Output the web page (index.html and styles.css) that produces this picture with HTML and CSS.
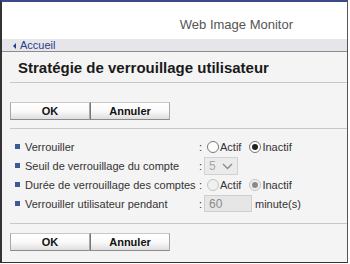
FILE: index.html
```html
<!DOCTYPE html>
<html lang="fr">
<head>
    <meta charset="UTF-8">
    <title>Stratégie de verrouillage utilisateur</title>
    <link rel="stylesheet" href="styles.css">
</head>
<body>

<div class="window">
    <header class="brand">Web Image Monitor</header>

    <nav class="crumbs">
        <a href="#" class="back">Accueil</a>
    </nav>

    <main class="content">
        <h1>Stratégie de verrouillage utilisateur</h1>

        <div class="actions">
            <button type="button">OK</button><button type="button">Annuler</button>
        </div>

        <ul class="settings">
            <li>
                <span class="label">Verrouiller</span>
                <span class="colon">:</span>
                <span class="controls">
                    <label><input type="radio" name="lock"> Actif</label>
                    <label><input type="radio" name="lock" checked> Inactif</label>
                </span>
            </li>
            <li>
                <span class="label">Seuil de verrouillage du compte</span>
                <span class="colon">:</span>
                <span class="controls">
                    <span class="select">
                        <select disabled><option>5</option></select>
                        <svg class="chev" width="11" height="7" viewBox="0 0 11 7"><path d="M1 1l4.5 4.5L10 1" fill="none" stroke="#8a8a8a" stroke-width="1.3"/></svg>
                    </span>
                </span>
            </li>
            <li>
                <span class="label">Durée de verrouillage des comptes</span>
                <span class="colon">:</span>
                <span class="controls">
                    <label><input type="radio" name="duration" disabled> Actif</label>
                    <label><input type="radio" name="duration" checked disabled> Inactif</label>
                </span>
            </li>
            <li>
                <span class="label">Verrouiller utilisateur pendant</span>
                <span class="colon">:</span>
                <span class="controls">
                    <input type="text" class="minutes" value="60" disabled>
                    <span class="unit">minute(s)</span>
                </span>
            </li>
        </ul>

        <div class="actions">
            <button type="button">OK</button><button type="button">Annuler</button>
        </div>
    </main>
</div>

</body>
</html>
```

FILE: styles.css
```css
* {
    box-sizing: border-box;
}
body {
    margin: 0;
    background-color: #ffffff;
    font-family: "Liberation Sans", Arial, sans-serif;
    color: #333;
}
.window {
    width: 348px;
    height: 263px;
    border-top: 2px solid #3d4a8a;
    border-left: 2px solid #333;
    border-right: 1px solid #555;
    border-bottom: 1px solid #333;
    background-color: #f4f4f4;
    display: flex;
    flex-direction: column;
}
.brand {
    height: 37px;
    background-color: #fff;
    text-align: right;
    padding: 16px 54px 0 0;
    font-size: 13px;
    line-height: 13px;
    color: #555;
}
.crumbs {
    height: 13px;
    background-color: #e6e6ea;
    border-bottom: 1px solid #8c8c8c;
    padding-left: 11px;
    font-size: 11px;
    line-height: 12px;
}
.crumbs .back {
    color: #263c8c;
    text-decoration: none;
}
.crumbs .back::before {
    content: "";
    display: inline-block;
    border-right: 3px solid #263c8c;
    border-top: 3px solid transparent;
    border-bottom: 3px solid transparent;
    margin-right: 4px;
    vertical-align: 0;
}
.content {
    flex: 1;
    padding: 7px 0 0 8px;
}
.content h1 {
    margin: 0 0 19px;
    padding: 0 0 5px 8px;
    font-size: 15px;
    line-height: 18px;
    font-weight: bold;
    color: #1a1a1a;
    border-bottom: 1px solid #c8c8c8;
}
.actions {
    display: flex;
}
.actions button {
    width: 80px;
    height: 18px;
    padding: 0;
    font-family: "Liberation Sans", Arial, sans-serif;
    font-size: 11px;
    font-weight: bold;
    color: #111;
    background: linear-gradient(#ffffff, #fafafa 50%, #dedede);
    border: 1px solid #a8a8a8;
    border-top-color: #c8c8c8;
    border-bottom-color: #8c8c8c;
}
.actions button + button {
    border-left-color: #777;
}
.settings {
    list-style: none;
    margin: 8px 0 9px;
    padding: 8px 0 10px 5px;
    border-top: 1px solid #c8c8c8;
    border-bottom: 1px solid #c8c8c8;
    font-size: 11px;
}
.settings li {
    display: flex;
    align-items: center;
    height: 19px;
}
.settings li::before {
    content: "";
    width: 5px;
    height: 5px;
    background-color: #3d5a98;
    margin-right: 5px;
}
.settings .label {
    width: 174px;
}
.settings .colon {
    width: 5px;
}
.settings .controls {
    display: flex;
    align-items: center;
}
.settings .controls label {
    display: flex;
    align-items: center;
    margin-right: 5px;
}
.settings input[type="radio"] {
    appearance: none;
    width: 12px;
    height: 12px;
    margin: 0 1px 0 3px;
    border: 1px solid #777;
    border-radius: 50%;
    background-color: #fff;
    display: grid;
    place-content: center;
}
.settings input[type="radio"]:checked::before {
    content: "";
    width: 6px;
    height: 6px;
    border-radius: 50%;
    background-color: #222;
}
.settings input[type="radio"]:disabled {
    border-color: #c4c4c4;
    background-color: #f0f0f0;
}
.settings input[type="radio"]:disabled:checked::before {
    background-color: #8a8a8a;
}
.select {
    position: relative;
    display: inline-block;
}
.select select {
    appearance: none;
    width: 34px;
    height: 18px;
    padding: 0 0 0 4px;
    font-family: "Liberation Sans", Arial, sans-serif;
    font-size: 12px;
    color: #8a8a8a;
    background-color: #e8e8e8;
    border: 1px solid #c4c4c4;
}
.select .chev {
    position: absolute;
    right: 5px;
    top: 6px;
}
.minutes {
    width: 48px;
    height: 17px;
    padding: 0 4px;
    font-family: "Liberation Sans", Arial, sans-serif;
    font-size: 12px;
    color: #8a8a8a;
    background-color: #e6e6e6;
    border: 1px solid #cfcfcf;
}
.unit {
    margin-left: 3px;
}
```
